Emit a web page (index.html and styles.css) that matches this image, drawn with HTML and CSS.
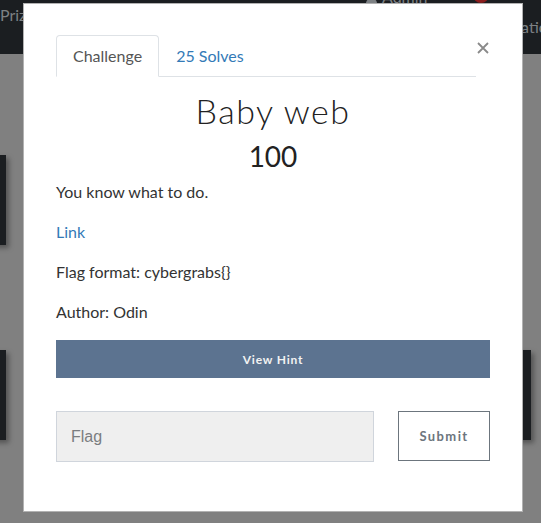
FILE: index.html
```html
<!DOCTYPE html>
<html lang="en">
<head>
<meta charset="utf-8">
<title>Baby web</title>
<link rel="stylesheet" href="styles.css">
</head>
<body>
<div class="page">
  <nav class="topbar">
    <span class="nav-link prizes">Prizes</span>
    <span class="nav-user">
      <svg class="user-icon" viewBox="0 0 14 14" width="13" height="13"><circle cx="7" cy="4" r="3.2" fill="#7d8184"/><path d="M1 14c0-4 2.6-6 6-6s6 2 6 6z" fill="#7d8184"/></svg>
      Admin
    </span>
    <span class="nav-badge"></span>
    <span class="nav-link notif">Notifications</span>
  </nav>
  <main class="board">
    <div class="row row-1"><div class="card card-left"></div></div>
    <div class="row row-2"><div class="card card-left"></div><div class="card card-right"></div></div>
  </main>
</div>

<div class="modal">
  <div class="modal-header">
    <ul class="tabs">
      <li class="tab active">Challenge</li>
      <li class="tab">25 Solves</li>
    </ul>
    <button class="close" aria-label="Close">
      <svg viewBox="0 0 12 12" width="12" height="12"><path d="M1 1L11 11M11 1L1 11" stroke="#8a8a8a" stroke-width="1.8" fill="none"/></svg>
    </button>
  </div>
  <div class="modal-body">
    <h3 class="title">Baby web</h3>
    <h4 class="value">100</h4>
    <p>You know what to do.</p>
    <p><a class="link" href="#">Link</a></p>
    <p>Flag format: cybergrabs{}</p>
    <p>Author: Odin</p>
    <button class="hint">View Hint</button>
    <form class="submit-row">
      <input class="flag-input" type="text" placeholder="Flag">
      <button class="submit" type="button">Submit</button>
    </form>
  </div>
</div>
</body>
</html>
```
FILE: styles.css
```css
* { box-sizing: border-box; }
html, body { margin: 0; padding: 0; }
body {
  width: 541px;
  height: 523px;
  overflow: hidden;
  background: #808080;
  font-family: "Lato", "Liberation Sans", sans-serif;
  position: relative;
}
.page { width: 541px; }
.topbar {
  height: 54px;
  background: #1b1e21;
  display: flex;
  align-items: flex-start;
  overflow: hidden;
  color: #7d8184;
  font-size: 16px;
  line-height: 22px;
}
.prizes { width: 60px; margin-top: 4px; flex: none; }
.nav-user {
  flex: none;
  margin-left: 305px;
  margin-top: -14px;
  display: flex;
  align-items: center;
  gap: 4px;
}
.nav-badge {
  flex: none;
  width: 16px;
  height: 16px;
  border-radius: 50%;
  background: #8a1d1d;
  margin-left: 45px;
  margin-top: -13px;
}
.notif { flex: none; margin-left: -15px; margin-top: 16px; white-space: nowrap; }

.board { padding-top: 101px; }
.row { display: flex; height: 90px; }
.row-2 { margin-top: 105px; }
.card {
  height: 90px;
  background: #1b1e21;
  box-shadow: 3px 3px 5px rgba(0,0,0,.35);
}
.card-left { width: 106px; margin-left: -100px; }
.card-right { width: 120px; margin-left: auto; margin-right: 10px; }

.modal {
  position: absolute;
  left: 23px;
  top: 3px;
  width: 500px;
  height: 509px;
  background: #fff;
  border: 1px solid rgba(0,0,0,.3);
  padding: 31px 32px 0 32px;
  color: #333;
}
.modal-header { display: flex; align-items: flex-start; }
.tabs {
  flex: 1;
  list-style: none;
  margin: 0;
  padding: 0;
  display: flex;
  border-bottom: 1px solid #dee2e6;
}
.tab {
  font-size: 16px;
  line-height: 22px;
  padding: 9px 16px;
  border: 1px solid transparent;
  border-radius: 4px 4px 0 0;
  margin-bottom: -1px;
  color: #337ab7;
}
.tab.active {
  color: #555;
  border-color: #dee2e6 #dee2e6 #fff;
  background: #fff;
}
.close {
  flex: none;
  border: 0;
  background: none;
  padding: 0;
  width: 12px;
  height: 12px;
  margin: 7px 1px 0 1px;
  display: block;
}
.close svg { display: block; }

.modal-body { text-align: left; }
.title {
  margin: 14px 0 0;
  text-align: center;
  font-size: 34px;
  line-height: 40px;
  font-weight: 300;
  letter-spacing: 1.5px;
  color: #222;
}
.value {
  margin: 8px 0 0;
  text-align: center;
  font-size: 28px;
  line-height: 34px;
  font-weight: 400;
  color: #222;
}
p {
  margin: 7px 0 0;
  font-size: 16px;
  line-height: 24px;
  color: #333;
}
p + p { margin-top: 16px; }
.link { color: #337ab7; text-decoration: none; }
.hint {
  display: block;
  width: 100%;
  height: 38px;
  margin-top: 16px;
  border: 0;
  background: #5c7390;
  color: #f2f2f2;
  font-family: "Lato", "Liberation Sans", sans-serif;
  font-weight: 700;
  font-size: 12px;
  letter-spacing: 0.8px;
}
.submit-row {
  margin-top: 33px;
  display: flex;
  align-items: flex-start;
  gap: 24px;
}
.flag-input {
  width: 318px;
  height: 51px;
  background: #efefef;
  border: 1px solid #d0d5dc;
  padding: 0 14px;
  font-family: "Liberation Sans", Arial, sans-serif;
  font-size: 16px;
  color: #333;
  outline: none;
}
.flag-input::placeholder { color: #7a7d80; }
.submit {
  width: 92px;
  height: 50px;
  background: #fff;
  border: 1px solid #6c757d;
  color: #6c757d;
  font-family: "Lato", "Liberation Sans", sans-serif;
  font-weight: 700;
  font-size: 13px;
  letter-spacing: 1.4px;
}
```
